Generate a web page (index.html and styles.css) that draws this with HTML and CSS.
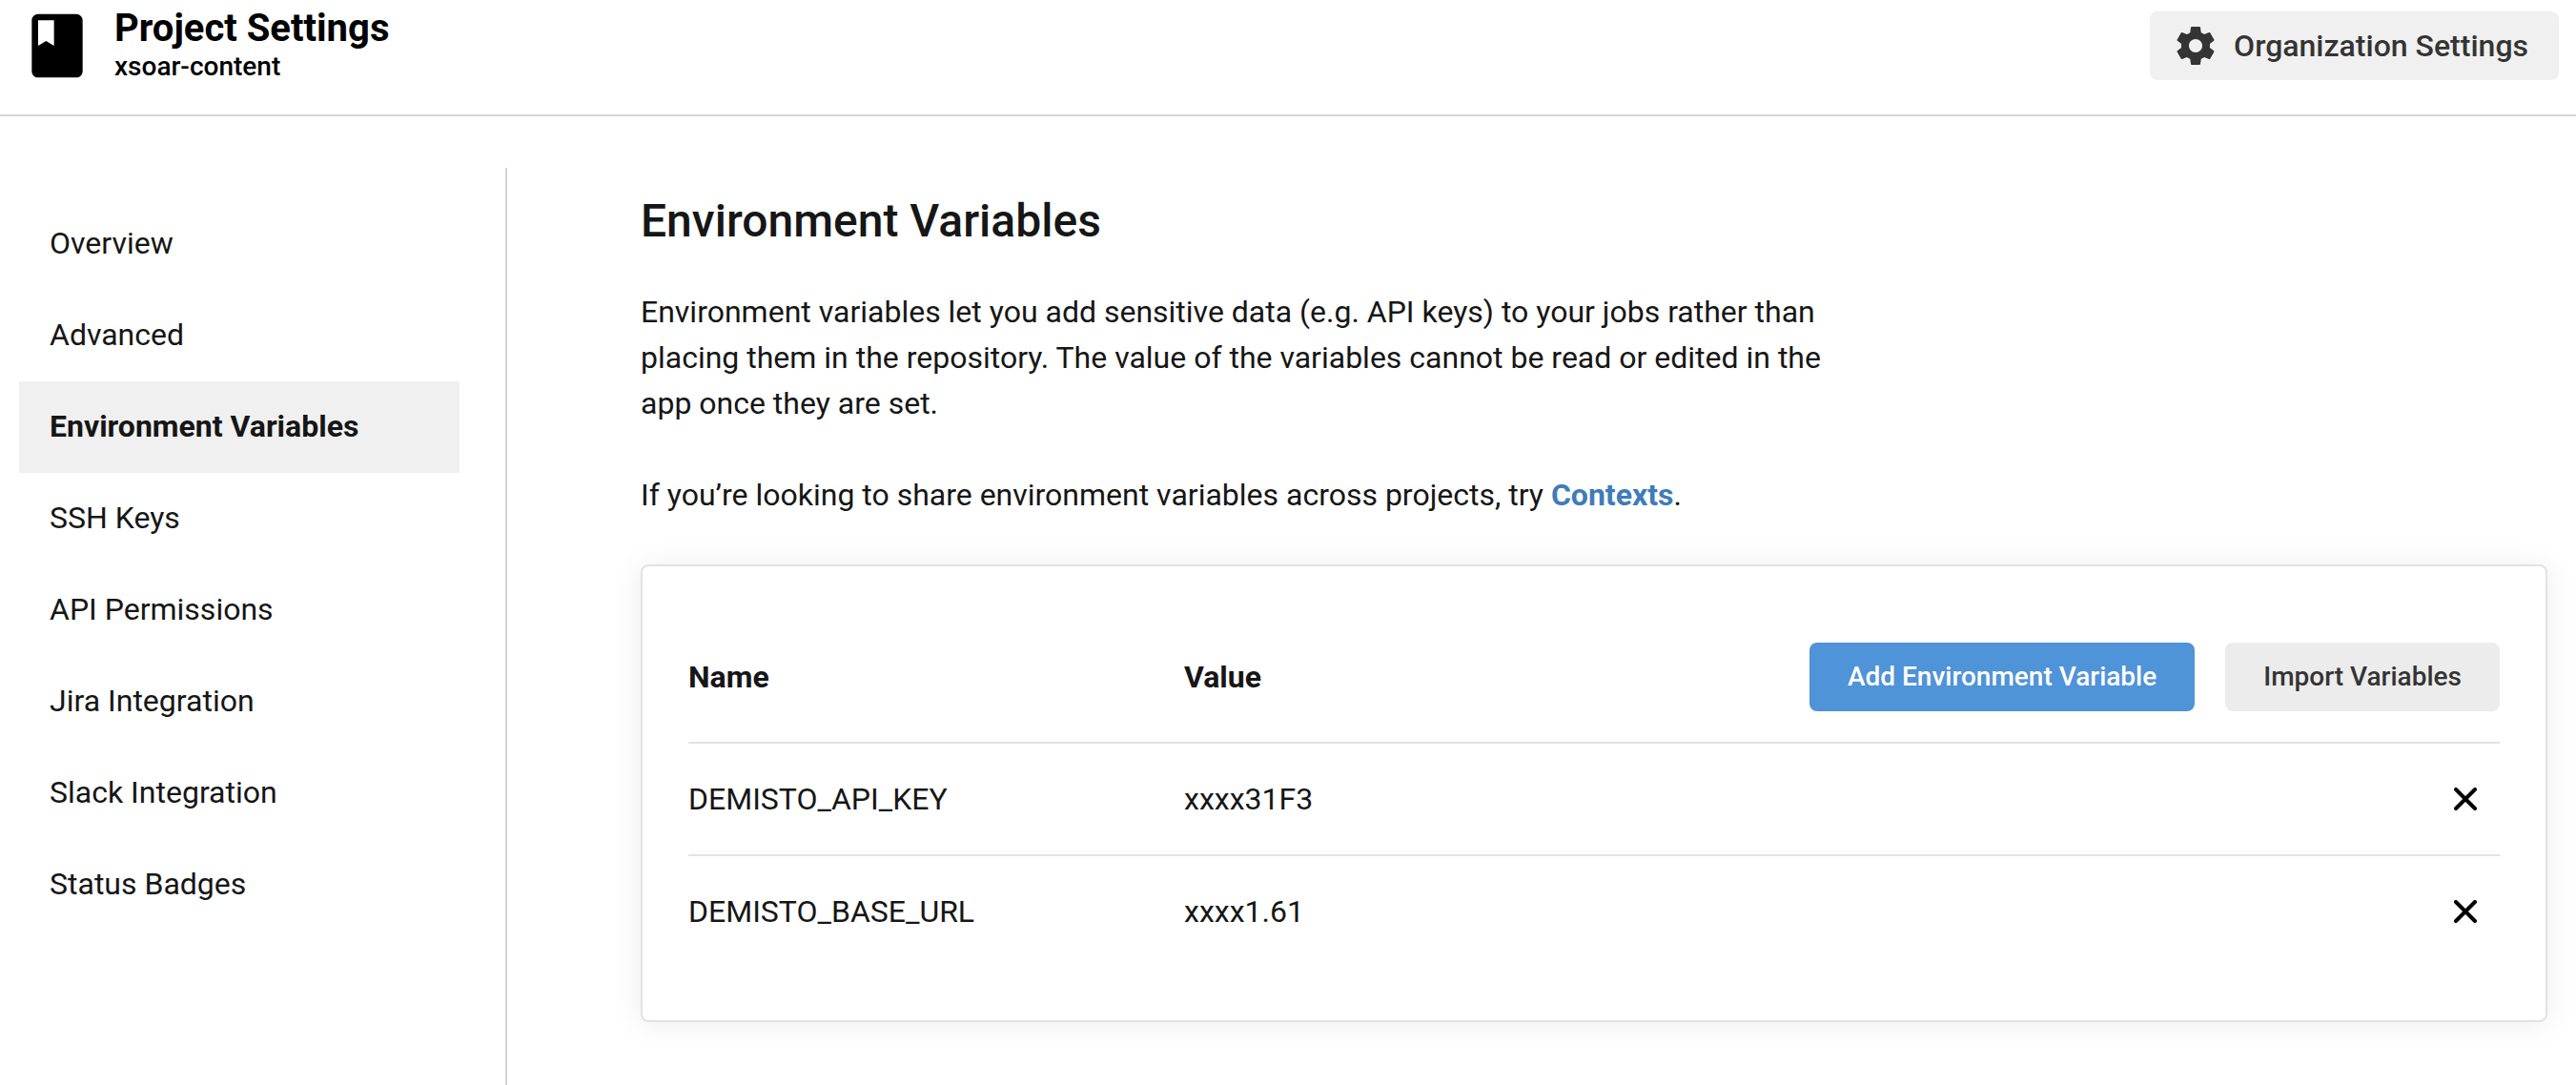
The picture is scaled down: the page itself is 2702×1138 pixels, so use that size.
FILE: index.html
```html
<!DOCTYPE html>
<html lang="en">
<head>
<meta charset="utf-8">
<title>Project Settings</title>
<meta name="viewport" content="width=device-width, initial-scale=1">
<link rel="stylesheet" href="styles.css">
</head>
<body>
<header class="topbar">
  <div class="project">
    <svg class="project-icon" viewBox="0 0 24 24" aria-hidden="true"><path d="M18 2H6c-1.100 0-2 .9-2 2v16c0 1.100.9 2 2 2h12c1.100 0 2-.9 2-2V4c0-1.100-.9-2-2-2zM6 4h5v8l-2.500-1.500L6 12V4z"/></svg>
    <div>
      <h1 class="project-title">Project Settings</h1>
      <p class="project-name">xsoar-content</p>
    </div>
  </div>
  <button class="button button-org" type="button">
    <svg class="gear-icon" viewBox="0 0 24 24" aria-hidden="true"><path d="M19.430 12.980c.04-.32.07-.64.07-.98s-.03-.66-.07-.98l2.110-1.650c.19-.15.24-.42.12-.64l-2-3.460c-.12-.22-.39-.3-.61-.22l-2.490 1c-.52-.4-1.080-.73-1.690-.98l-.38-2.650C14.460 2.180 14.250 2 14 2h-4c-.25 0-.46.18-.49.42l-.38 2.650c-.61.25-1.170.59-1.690.98l-2.490-1c-.23-.09-.49 0-.61.22l-2 3.460c-.13.22-.07.49.12.64l2.110 1.650c-.04.32-.07.65-.07.98s.03.66.07.98l-2.110 1.650c-.19.15-.24.42-.12.64l2 3.460c.12.22.39.3.61.22l2.490-1c.52.4 1.080.73 1.690.98l.38 2.650c.03.24.24.42.49.42h4c.25 0 .46-.18.49-.42l.38-2.650c.61-.25 1.170-.59 1.690-.98l2.490 1c.23.09.49 0 .61-.22l2-3.460c.12-.22.07-.49-.12-.64l-2.110-1.650zM12 15.500c-1.930 0-3.500-1.570-3.500-3.500s1.570-3.500 3.500-3.500 3.500 1.570 3.500 3.500-1.570 3.500-3.500 3.500z"/></svg>
    Organization Settings
  </button>
</header>
<div class="layout">
  <nav class="sidebar" aria-label="Project settings">
    <a class="nav-link" href="#overview">Overview</a>
    <a class="nav-link" href="#advanced">Advanced</a>
    <a class="nav-link is-active" href="#env-vars" aria-current="page">Environment Variables</a>
    <a class="nav-link" href="#ssh">SSH Keys</a>
    <a class="nav-link" href="#api">API Permissions</a>
    <a class="nav-link" href="#jira">Jira Integration</a>
    <a class="nav-link" href="#slack">Slack Integration</a>
    <a class="nav-link" href="#badges">Status Badges</a>
  </nav>
  <main class="content">
    <h2 class="heading">Environment Variables</h2>
    <div class="intro">
      <p>Environment variables let you add sensitive data (e.g. API keys) to your jobs rather than placing them in the repository. The value of the variables cannot be read or edited in the app once they are set.</p>
      <p>If you’re looking to share environment variables across projects, try <a class="link" href="#contexts">Contexts</a>.</p>
    </div>
    <section class="card">
      <table class="vars">
        <thead>
          <tr>
            <th class="col-name" scope="col">Name</th>
            <th scope="col">Value</th>
            <td>
              <div class="actions">
                <button class="button button-primary" type="button">Add Environment Variable</button>
                <button class="button" type="button">Import Variables</button>
              </div>
            </td>
          </tr>
        </thead>
        <tbody>
          <tr>
            <td>DEMISTO_API_KEY</td>
            <td>xxxx31F3</td>
            <td>
              <div class="actions">
                <button class="remove" type="button" aria-label="Remove DEMISTO_API_KEY"><svg class="remove-icon" viewBox="0 0 24 24"><path d="M2 2l20 20M22 2L2 22"/></svg></button>
              </div>
            </td>
          </tr>
          <tr>
            <td>DEMISTO_BASE_URL</td>
            <td>xxxx1.61</td>
            <td>
              <div class="actions">
                <button class="remove" type="button" aria-label="Remove DEMISTO_BASE_URL"><svg class="remove-icon" viewBox="0 0 24 24"><path d="M2 2l20 20M22 2L2 22"/></svg></button>
              </div>
            </td>
          </tr>
        </tbody>
      </table>
    </section>
  </main>
</div>
</body>
</html>
```
FILE: styles.css
```css
* {
  box-sizing: border-box;
}

body {
  display: flex;
  flex-direction: column;
  min-height: 100vh;
  margin: 0;
  background: #fff;
  color: #161616;
  font: 400 32px/48px Roboto, "Liberation Sans", sans-serif;
}

h1,
h2,
p {
  margin: 0;
}

.topbar {
  display: flex;
  align-items: flex-start;
  justify-content: space-between;
  padding: 6px 18px 32px 20px;
  border-bottom: 2px solid #d4d4d4;
}

.project {
  display: flex;
  gap: 20px;
  color: #000;
}

.project-icon {
  width: 80px;
  height: 80px;
  margin-top: 2px;
}

.project-title {
  font-size: 40px;
  font-weight: 700;
  line-height: 48px;
}

.project-name {
  font-size: 28px;
  font-weight: 500;
  line-height: 32px;
}

.button {
  height: 72px;
  padding: 0 40px;
  border: 0;
  border-radius: 8px;
  background: #ececec;
  color: #343434;
  font: 500 28px/40px Roboto, "Liberation Sans", sans-serif;
  white-space: nowrap;
  cursor: pointer;
}

.button-primary {
  background: #4f93d8;
  color: #fff;
}

.button-org {
  display: flex;
  align-items: center;
  gap: 16px;
  margin-top: 6px;
  padding: 0 32px 0 24px;
  background: #f0f0f0;
  font-size: 32px;
}

.gear-icon {
  width: 48px;
  height: 48px;
  fill: currentColor;
}

.layout {
  display: flex;
  flex: 1;
  padding-top: 54px;
}

.sidebar {
  flex: 0 0 532px;
  padding: 32px 48px 32px 20px;
  border-right: 2px solid #d4d4d4;
}

.nav-link {
  display: block;
  padding: 23px 32px 25px;
  color: inherit;
  text-decoration: none;
}

.nav-link.is-active {
  background: #f0f0f0;
  font-weight: 700;
}

.content {
  flex: 1;
  min-width: 0;
  padding: 24px 30px 64px 140px;
}

.heading {
  margin-bottom: 39px;
  font-size: 48px;
  font-weight: 500;
  line-height: 64px;
}

.intro {
  display: flex;
  flex-direction: column;
  gap: 48px;
  max-width: 1280px;
  margin-bottom: 49px;
}

.link {
  color: #3f7cb8;
  font-weight: 700;
  text-decoration: none;
}

.card {
  padding: 48px 48px 56px;
  border: 2px solid #e2e2e2;
  border-radius: 8px;
  box-shadow: 0 2px 32px rgba(0, 0, 0, 0.08);
}

.vars {
  width: 100%;
  border-collapse: separate;
  border-spacing: 0;
}

.vars th,
.vars td {
  padding: 34px 0;
  text-align: left;
  vertical-align: middle;
}

.vars thead th,
.vars thead td {
  padding: 32px 0;
}

.vars tr:not(tbody tr:last-child) > * {
  border-bottom: 2px solid #e2e2e2;
}

.vars .col-name {
  width: 520px;
}

.actions {
  display: flex;
  justify-content: flex-end;
  gap: 32px;
}

.remove {
  padding: 12px 24px;
  border: 0;
  background: none;
  cursor: pointer;
}

.remove-icon {
  display: block;
  width: 24px;
  height: 24px;
  stroke: #000;
  stroke-width: 4;
  stroke-linecap: round;
}
```
